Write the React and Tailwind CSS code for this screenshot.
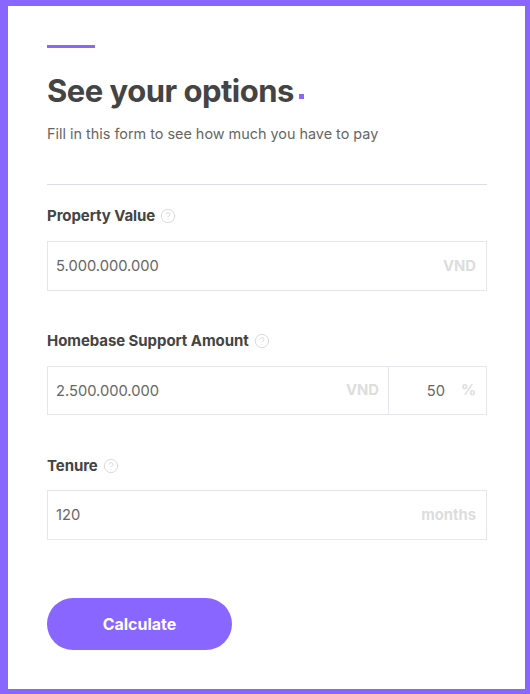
import { CircleHelp } from 'lucide-react';

function FieldLabel({ children }) {
  return (
    <div className="flex items-center gap-[5px] h-5">
      <span className="text-[15px] font-bold text-[#444444] tracking-[-0.07px]">{children}</span>
      <CircleHelp size={16} strokeWidth={1} className="text-[#c8c8c8]" />
    </div>
  );
}

function Unit({ children }) {
  return <span className="text-[14.8px] font-bold text-[#dddddd]">{children}</span>;
}

export default function App() {
  return (
    <div className="w-[530px] h-[694px] bg-[#8966ff] pt-[6px] pl-2 pr-[5px] pb-[5px] font-['Inter',sans-serif]">
      <div className="bg-white h-full pl-[39px] pr-[38px] pt-[39px]">
        <div className="w-12 h-[3px] bg-[#8966ff]" />

        <h1 className="mt-[23px] flex items-end text-[31px] leading-[40px] font-bold text-[#444444] tracking-[-0.5px]">
          See your options
          <span className="ml-[5px] mb-[12px] w-[5px] h-[5px] bg-[#8966ff]" />
        </h1>
        <p className="mt-[13px] text-[14.4px] leading-5 text-[#666666]">
          Fill in this form to see how much you have to pay
        </p>

        <div className="mt-10 h-px bg-[#dcdcec]" />

        {/* Property value */}
        <div className="mt-[21px]">
          <FieldLabel>Property Value</FieldLabel>
          <div className="mt-[15px] h-[50px] border border-[#e6e6f0] flex items-center justify-between pl-2 pr-[10px]">
            <span className="text-[14.7px] text-[#666666]">5.000.000.000</span>
            <Unit>VND</Unit>
          </div>
        </div>

        {/* Support amount */}
        <div className="mt-10">
          <FieldLabel>Homebase Support Amount</FieldLabel>
          <div className="mt-[15px] h-[49px] border border-[#e6e6f0] flex">
            <div className="flex-1 flex items-center justify-between pl-2 pr-[9px]">
              <span className="text-[14.7px] text-[#666666] pt-px">2.500.000.000</span>
              <Unit>VND</Unit>
            </div>
            <div className="w-[98px] border-l border-[#e6e6f0] flex items-center justify-end gap-[16px] pr-[10px]">
              <span className="text-[14.7px] text-[#666666] pt-px">50</span>
              <Unit>%</Unit>
            </div>
          </div>
        </div>

        {/* Tenure */}
        <div className="mt-[41px]">
          <FieldLabel>Tenure</FieldLabel>
          <div className="mt-[14px] h-[50px] border border-[#e6e6f0] flex items-center justify-between pl-2 pr-[10px]">
            <span className="text-[14.7px] text-[#666666] pt-px">120</span>
            <Unit>months</Unit>
          </div>
        </div>

        <button className="mt-[58px] w-[185px] h-[52px] rounded-full bg-[#8966ff] text-white text-base font-bold pb-px">
          Calculate
        </button>
      </div>
    </div>
  );
}
